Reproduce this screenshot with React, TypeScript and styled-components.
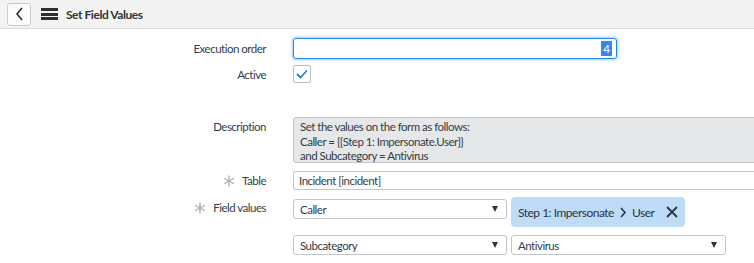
import * as React from 'react';
import styled, { createGlobalStyle } from 'styled-components';

const GlobalStyle = createGlobalStyle`
  html, body {
    margin: 0;
    padding: 0;
    background: #fff;
    overflow: hidden;
  }
  body {
    font-family: Lato, "Liberation Sans", sans-serif;
    font-size: 11.5px;
    letter-spacing: -0.5px;
    color: #343d47;
  }
`;

const Header = styled.header`
  display: flex;
  align-items: center;
  height: 28px;
  padding-left: 7px;
  background: #f3f3f3;
  border-bottom: 1px solid #d9d9d9;
`;

const BackButton = styled.button`
  display: flex;
  align-items: center;
  justify-content: center;
  width: 24px;
  height: 23px;
  padding: 0;
  background: #fbfbfb;
  border: 1px solid #c9c9c9;
  border-radius: 3px;
  color: #2e2e2e;
`;

const Burger = styled.span`
  display: flex;
  flex-direction: column;
  justify-content: space-between;
  width: 17px;
  height: 12px;
  margin-left: 10px;

  &::before, &::after, & > i {
    content: '';
    display: block;
    height: 3px;
    background: #2f2f2f;
  }
`;

const Title = styled.h1`
  margin: 0 0 0 8px;
  font-size: 12px;
  font-weight: 700;
  letter-spacing: -0.45px;
  color: #333;
`;

const Form = styled.main`
  display: flex;
  flex-direction: column;
  padding-top: 9px;
`;

const Row = styled.div<{ $top?: number; $align?: string }>`
  display: flex;
  align-items: ${(p) => p.$align || 'center'};
  margin-top: ${(p) => p.$top || 0}px;
`;

const Label = styled.label<{ $pad?: number }>`
  display: flex;
  justify-content: flex-end;
  align-items: center;
  gap: 7px;
  width: 266px;
  flex: none;
  padding-top: ${(p) => p.$pad || 0}px;
  color: #343d47;
  white-space: nowrap;
`;

const Field = styled.div`
  display: flex;
  flex-direction: column;
  gap: 8px;
  margin-left: 27px;
`;

const FocusInput = styled.div`
  display: flex;
  align-items: center;
  justify-content: flex-end;
  box-sizing: border-box;
  width: 324px;
  height: 21px;
  padding-right: 4px;
  border: 1px solid #1f86e6;
  border-radius: 3px;
  box-shadow: 0 0 3px 1px rgba(80, 160, 240, 0.55);
`;

const Selected = styled.span`
  background: #3a86f0;
  color: #fff;
  padding: 0 2px;
  line-height: 15px;
  letter-spacing: 0;
`;

const Checkbox = styled.span`
  display: flex;
  align-items: center;
  justify-content: center;
  box-sizing: border-box;
  width: 18px;
  height: 18px;
  border: 1px solid #b9bcc0;
  border-radius: 2px;
  background: #fff;
`;

const ReadOnly = styled.div`
  box-sizing: border-box;
  width: 520px;
  height: 46px;
  padding: 2px 6px;
  background: #e6e7e8;
  border: 1px solid #c3c5c8;
  border-radius: 3px 0 0 3px;
  line-height: 14.5px;
  color: #343d47;
`;

const TextInput = styled.div`
  box-sizing: border-box;
  width: 520px;
  height: 19px;
  padding: 0 5px;
  display: flex;
  align-items: center;
  border: 1px solid #c3c5c8;
  border-right: none;
  border-radius: 3px 0 0 3px;
`;

const Pair = styled.div`
  display: flex;
  align-items: flex-start;
  gap: 4px;
`;

const Select = styled.div<{ $width: number }>`
  box-sizing: border-box;
  display: flex;
  align-items: center;
  justify-content: space-between;
  width: ${(p) => p.$width}px;
  height: 20px;
  padding: 0 8px 0 6px;
  border: 1px solid #c3c5c8;
  border-radius: 3px;
  background: #fff;
`;

const Arrow = styled.span`
  width: 0;
  height: 0;
  border-left: 3px solid transparent;
  border-right: 3px solid transparent;
  border-top: 6px solid #333;
`;

const Pill = styled.div`
  display: flex;
  align-items: center;
  gap: 5px;
  height: 30px;
  margin-top: -2px;
  padding: 0 6px 0 7px;
  background: #bedcf6;
  border-radius: 4px;
  color: #2a3440;
  font-size: 12px;
`;

const Star = () => (
  <svg width="12" height="12" viewBox="0 0 12 12" stroke="#a9acb0" strokeWidth="1.3">
    <line x1="6" y1="0.5" x2="6" y2="11.5" />
    <line x1="1.2" y1="3.2" x2="10.8" y2="8.8" />
    <line x1="1.2" y1="8.8" x2="10.8" y2="3.2" />
  </svg>
);

export default function App() {
  return (
    <>
      <GlobalStyle />
      <Header>
        <BackButton>
          <svg width="9" height="14" viewBox="0 0 9 14" fill="none" stroke="#2e2e2e" strokeWidth="1.6">
            <path d="M7 1 L2 7 L7 13" />
          </svg>
        </BackButton>
        <Burger>
          <i />
        </Burger>
        <Title>Set Field Values</Title>
      </Header>

      <Form>
        <Row>
          <Label>Execution order</Label>
          <Field>
            <FocusInput>
              <Selected>4</Selected>
            </FocusInput>
          </Field>
        </Row>

        <Row $top={6}>
          <Label>Active</Label>
          <Field>
            <Checkbox>
              <svg width="12" height="10" viewBox="0 0 12 10" fill="none" stroke="#2f7de1" strokeWidth="1.8">
                <path d="M1 5 L4.5 8.5 L11 1.5" />
              </svg>
            </Checkbox>
          </Field>
        </Row>

        <Row $top={34} $align="flex-start">
          <Label $pad={3}>Description</Label>
          <Field>
            <ReadOnly>
              Set the values on the form as follows:
              <br />
              Caller = {'{{'}Step 1: Impersonate.User{'}}'}
              <br />
              and Subcategory = Antivirus
            </ReadOnly>
          </Field>
        </Row>

        <Row $top={8}>
          <Label>
            <Star />
            Table
          </Label>
          <Field>
            <TextInput>Incident [incident]</TextInput>
          </Field>
        </Row>

        <Row $top={9} $align="flex-start">
          <Label $pad={2}>
            <Star />
            Field values
          </Label>
          <Field>
            <Pair>
              <Select $width={214}>
                Caller
                <Arrow />
              </Select>
              <Pill>
                Step 1: Impersonate
                <svg width="8" height="11" viewBox="0 0 8 11" fill="none" stroke="#2a3440" strokeWidth="1.6">
                  <path d="M2 1 L6 5.5 L2 10" />
                </svg>
                User
                <svg width="14" height="14" viewBox="0 0 14 14" stroke="#2a3440" strokeWidth="1.8" style={{ marginLeft: 6 }}>
                  <line x1="2" y1="2" x2="12" y2="12" />
                  <line x1="12" y1="2" x2="2" y2="12" />
                </svg>
              </Pill>
            </Pair>
            <Pair>
              <Select $width={214}>
                Subcategory
                <Arrow />
              </Select>
              <Select $width={215}>
                Antivirus
                <Arrow />
              </Select>
            </Pair>
          </Field>
        </Row>
      </Form>
    </>
  );
}
